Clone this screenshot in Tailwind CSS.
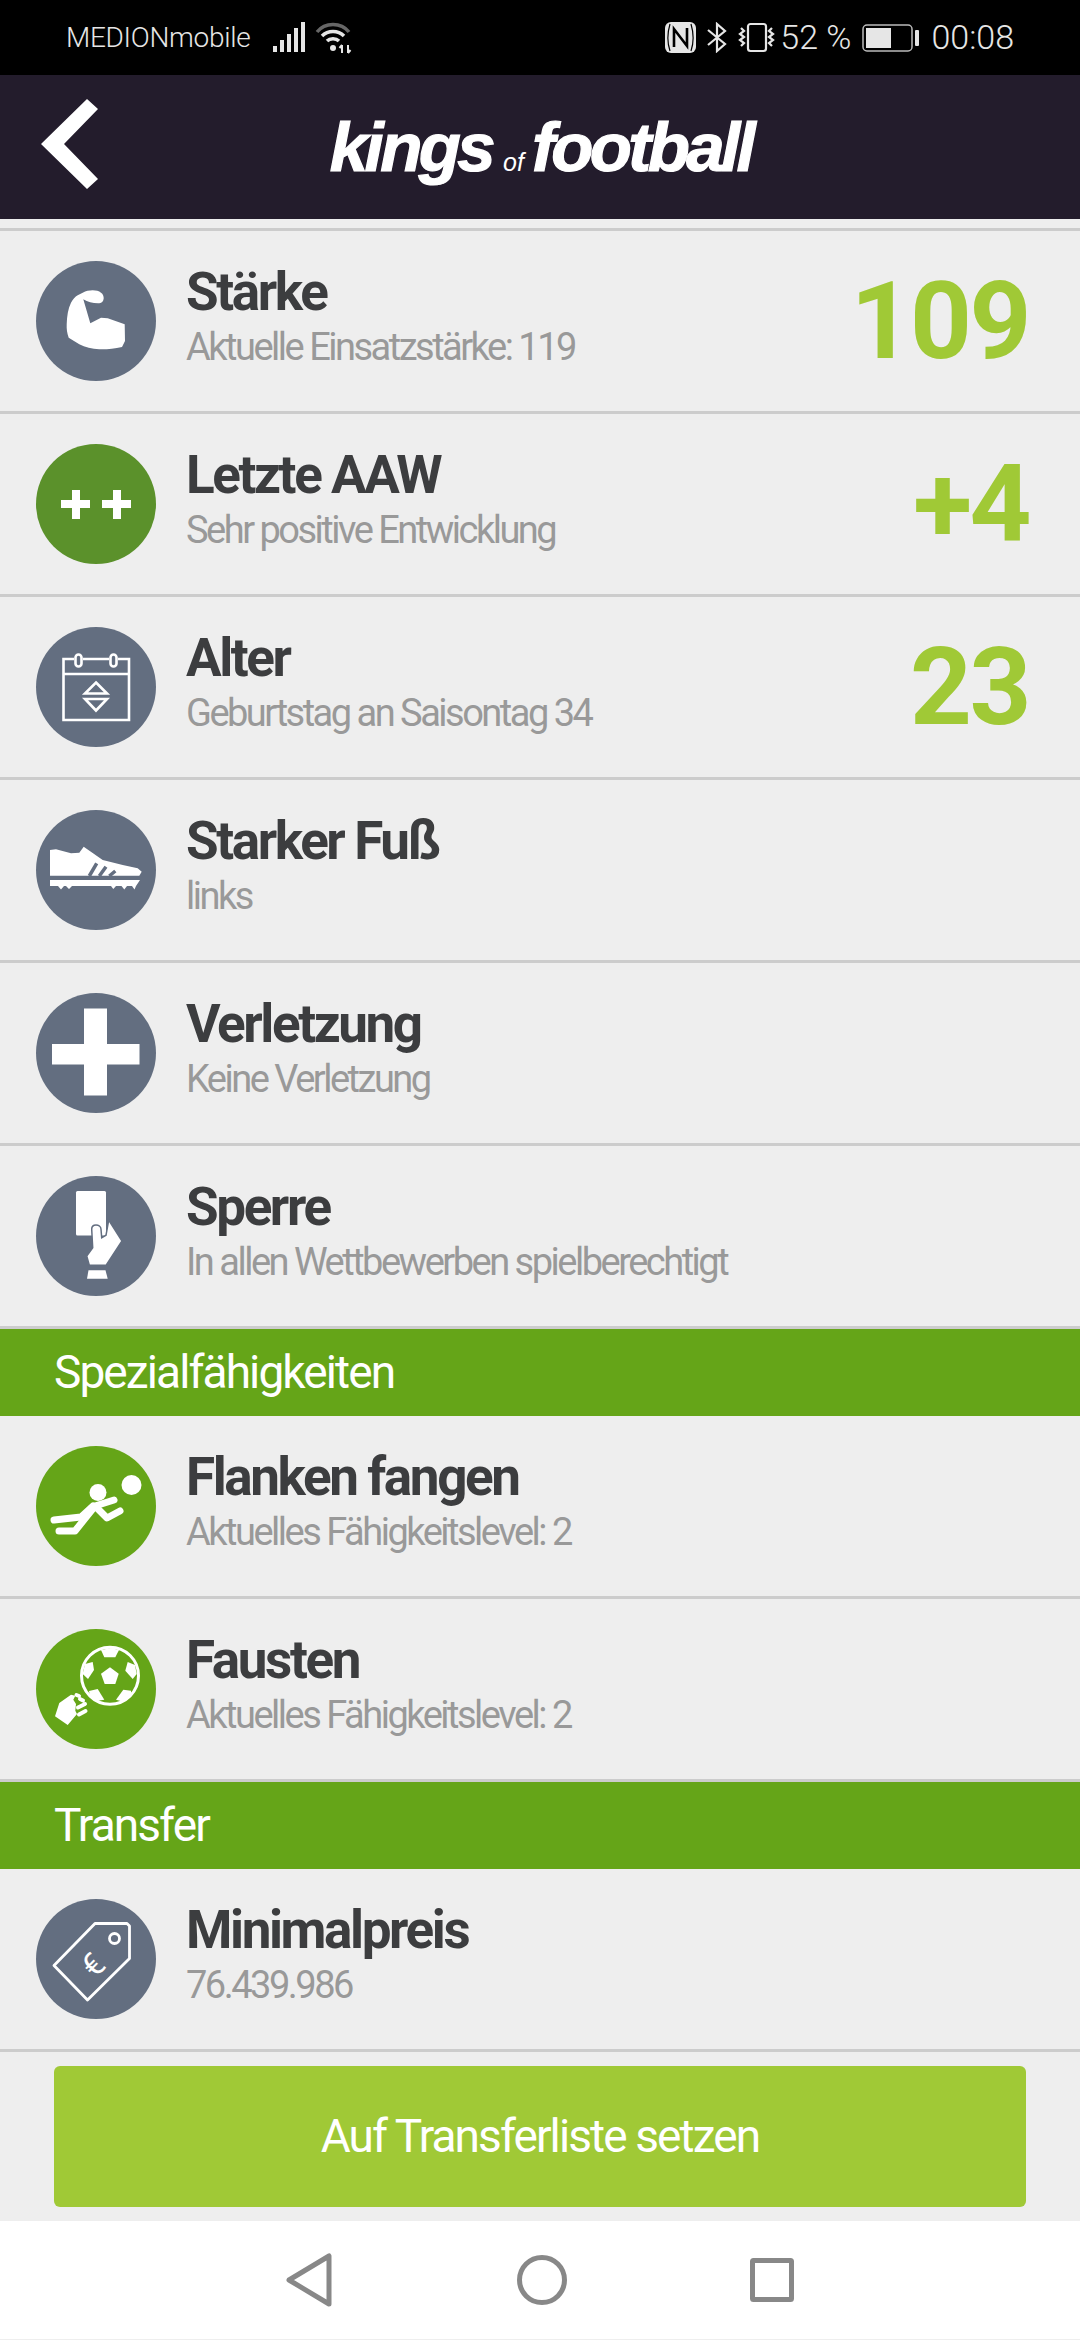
<!DOCTYPE html>
<html lang="de">
<head>
    <title>Kings of Football</title>
    <script src="https://cdn.jsdelivr.net/npm/@tailwindcss/browser@4"></script>
</head>
<body class="w-[1080px] h-[2340px] overflow-hidden bg-[#eeeeee] font-['Roboto',sans-serif]">

    <!-- status bar -->
    <div class="h-[75px] bg-black flex items-center justify-between pl-[66px] pr-[66px] text-[#e6e6e6] font-light">
        <div class="flex items-center">
            <span class="text-[28px] tracking-[-0.3px]">MEDIONmobile</span>
            <svg class="ml-[23px]" width="34" height="32" viewBox="0 0 34 32" fill="#e6e6e6">
                <rect x="0" y="24" width="4" height="6"/><rect x="7" y="18" width="4" height="12"/><rect x="14" y="12" width="4" height="18"/><rect x="21" y="6" width="4" height="24"/><rect x="28" y="0" width="4" height="30"/>
            </svg>
            <svg class="ml-[8px]" width="38" height="32" viewBox="0 0 38 32" fill="none" stroke-width="3.5">
                <path d="M2 10 C10 0 26 0 34 10" stroke="#666"/>
                <path d="M7 14 C13 8 23 8 29 14" stroke="#e6e6e6"/>
                <path d="M12 19 C15 16 21 16 24 19" stroke="#e6e6e6"/>
                <circle cx="18" cy="26" r="3" fill="#e6e6e6" stroke="none"/>
                <path d="M27 31 V23 M27 23 l-2.5 3 M33 23 V31 M33 31 l2.5 -3" stroke="#e6e6e6" stroke-width="2"/>
            </svg>
        </div>
        <div class="flex items-center text-[34px]">
            <svg width="31" height="31" viewBox="0 0 31 31">
                <rect width="31" height="31" rx="6" fill="#e6e6e6"/>
                <path d="M5 2 C2 12 2 20 5 29 M26 2 C29 12 29 20 26 29" fill="none" stroke="#000" stroke-width="1.2"/>
                <path d="M9 25 V7 L22 24 V6" fill="none" stroke="#000" stroke-width="2.6"/>
            </svg>
            <svg class="ml-[11px]" width="20" height="31" viewBox="0 0 20 31" fill="none" stroke="#e6e6e6" stroke-width="2.2">
                <path d="M1 8 L18 22 L10 29 V2 L18 9 L1 23"/>
            </svg>
            <svg class="ml-[10px]" width="40" height="31" viewBox="0 0 40 31" fill="none" stroke="#e6e6e6" stroke-width="2.2">
                <rect x="11" y="2" width="18" height="27" rx="2.5"/>
                <path d="M4 6 l3 3 -4 3 4 3 -4 3 4 3 -3 3"/>
                <path d="M35 6 l-3 3 4 3 -4 3 4 3 -4 3 3 3"/>
            </svg>
            <span class="ml-[3px]">52 %</span>
            <svg class="ml-[11px]" width="58" height="28" viewBox="0 0 58 28">
                <rect x="1" y="1" width="49" height="26" rx="4" fill="none" stroke="#bbb" stroke-width="1.5"/>
                <rect x="4" y="4" width="25" height="20" fill="#e6e6e6"/>
                <rect x="53" y="6" width="4" height="16" rx="1" fill="#e6e6e6"/>
            </svg>
            <span class="ml-[11px]">00:08</span>
        </div>
    </div>

    <!-- header -->
    <div class="h-[144px] bg-[#231c2c] relative flex items-center justify-center text-white">
        <svg class="absolute left-[41px] top-[24px]" width="58" height="92" viewBox="0 0 58 92" fill="#fff">
            <polygon points="46,0 57,10 23,45 57,80 46,90 0,45"/>
        </svg>
        <div class="flex items-baseline font-['Liberation_Sans',sans-serif] font-bold italic text-[69px] tracking-[-3.6px] [-webkit-text-stroke:1.2px_white] mt-[2px] pl-[2px]">
            <span>kings</span>
            <span class="text-[25px] font-normal tracking-[0px] [-webkit-text-stroke:0px_white] ml-[11px] mr-[8px]">of</span>
            <span>football</span>
        </div>
    </div>

    <div class="h-[9px]"></div>
    <div class="h-[3px] bg-[#cccccc]"></div>

    <!-- Stärke -->
    <div class="h-[183px] border-b-[3px] border-[#cccccc] flex items-center pl-[36px] pr-[51px]">
        <div class="w-[120px] h-[120px] rounded-full bg-[#636e80] shrink-0">
            <svg width="120" height="120" viewBox="0 0 120 120" fill="#fff">
                <path d="M46.7 31.7 C50 30 53 29.3 56.7 29.3 C60 29.3 63 30 65 31.7 C67 33 67.7 35 67.7 37.3 C67.5 40 66 42 63.3 42.3 C57 42.5 52 41 47.3 38.3 L54.3 62.3 L65 56.7 L71.7 57.3 L88.7 63.3 L89 80 L86 86 C78 88 70 88.5 63.3 88.3 C56 88 49 86 43.3 83.3 L32.7 76.7 C31 72 30.5 68 30.7 63.3 C31 55 32 48 35 41.7 C37 38 39 36 41.7 34.3 Z"/>
            </svg>
        </div>
        <div class="ml-[30px] flex-1">
            <div class="text-[53px] leading-[54px] font-bold tracking-[-2.4px] text-[#3c3d3f] mt-[-8px] mb-[6px]">Stärke</div>
            <div class="text-[38px] leading-[44px] font-normal tracking-[-2.5px] text-[#999999]">Aktuelle Einsatzstärke: 119</div>
        </div>
        <div class="text-[108px] leading-none font-bold text-[#a0c936] tracking-[-2.5px]">109</div>
    </div>

    <!-- Letzte AAW -->
    <div class="h-[183px] border-b-[3px] border-[#cccccc] flex items-center pl-[36px] pr-[51px]">
        <div class="w-[120px] h-[120px] rounded-full bg-[#5b912b] shrink-0">
            <svg width="120" height="120" viewBox="0 0 120 120" fill="#fff">
                <path d="M36 46 h8 v10 h10 v8 h-10 v11 h-8 v-11 h-11 v-8 h11 Z"/>
                <path d="M77 46 h8 v10 h10 v8 h-10 v11 h-8 v-11 h-11 v-8 h11 Z"/>
            </svg>
        </div>
        <div class="ml-[30px] flex-1">
            <div class="text-[53px] leading-[54px] font-bold tracking-[-2.4px] text-[#3c3d3f] mt-[-8px] mb-[6px]">Letzte AAW</div>
            <div class="text-[38px] leading-[44px] font-normal tracking-[-2.5px] text-[#999999]">Sehr positive Entwicklung</div>
        </div>
        <div class="text-[108px] leading-none font-bold text-[#a0c936] tracking-[-2.5px]">+4</div>
    </div>

    <!-- Alter -->
    <div class="h-[183px] border-b-[3px] border-[#cccccc] flex items-center pl-[36px] pr-[51px]">
        <div class="w-[120px] h-[120px] rounded-full bg-[#636e80] shrink-0">
            <svg width="120" height="120" viewBox="0 0 120 120" fill="none" stroke="#fff" stroke-width="2.6">
                <path d="M38 32 H27.5 V93 H93 V32 H82 M47 32 H73 M27.5 47 H93"/>
                <rect x="39.5" y="27.5" width="6" height="12" rx="3"/>
                <rect x="74.5" y="27.5" width="6" height="12" rx="3"/>
                <polygon points="60,55.5 71,66.5 49,66.5"/>
                <polygon points="49,72 71,72 60,83.5"/>
            </svg>
        </div>
        <div class="ml-[30px] flex-1">
            <div class="text-[53px] leading-[54px] font-bold tracking-[-2.4px] text-[#3c3d3f] mt-[-8px] mb-[6px]">Alter</div>
            <div class="text-[38px] leading-[44px] font-normal tracking-[-2.5px] text-[#999999]">Geburtstag an Saisontag 34</div>
        </div>
        <div class="text-[108px] leading-none font-bold text-[#a0c936] tracking-[-2.5px]">23</div>
    </div>

    <!-- Starker Fuß -->
    <div class="h-[183px] border-b-[3px] border-[#cccccc] flex items-center pl-[36px] pr-[51px]">
        <div class="w-[120px] h-[120px] rounded-full bg-[#636e80] shrink-0">
            <svg width="120" height="120" viewBox="0 0 120 120" fill="#fff">
                <path d="M14 40 L20 39.3 L35 43.3 L43.3 42.7 L47.7 36.7 L66.7 50 L86.7 55 L101.7 58.3 L105.7 61.7 L103.3 65.7 H14 Z"/>
                <path d="M14 70 H104 L100 76 L98.5 79.5 L96 76 H91 L88.3 79.5 L85.5 76 H80 L77.3 79 L75 76 H36 L33 79 L30 76 H28 L25 79.5 L22 76 H14 Z"/>
                <path d="M53.3 66 L60.7 53.3 M63.3 66 L70 56.7 M73.3 66 L79.3 61" stroke="#636e80" stroke-width="3.5" fill="none"/>
            </svg>
        </div>
        <div class="ml-[30px] flex-1">
            <div class="text-[53px] leading-[54px] font-bold tracking-[-2.4px] text-[#3c3d3f] mt-[-8px] mb-[6px]">Starker Fuß</div>
            <div class="text-[38px] leading-[44px] font-normal tracking-[-2.5px] text-[#999999]">links</div>
        </div>
    </div>

    <!-- Verletzung -->
    <div class="h-[183px] border-b-[3px] border-[#cccccc] flex items-center pl-[36px] pr-[51px]">
        <div class="w-[120px] h-[120px] rounded-full bg-[#636e80] shrink-0">
            <svg width="120" height="120" viewBox="0 0 120 120" fill="#fff">
                <path d="M48 15.5 H71 V51 H103.5 V71.5 H71 V102.5 H48 V71.5 H16 V51 H48 Z"/>
            </svg>
        </div>
        <div class="ml-[30px] flex-1">
            <div class="text-[53px] leading-[54px] font-bold tracking-[-2.4px] text-[#3c3d3f] mt-[-8px] mb-[6px]">Verletzung</div>
            <div class="text-[38px] leading-[44px] font-normal tracking-[-2.5px] text-[#999999]">Keine Verletzung</div>
        </div>
    </div>

    <!-- Sperre -->
    <div class="h-[183px] border-b-[3px] border-[#cccccc] flex items-center pl-[36px] pr-[51px]">
        <div class="w-[120px] h-[120px] rounded-full bg-[#636e80] shrink-0">
            <svg width="120" height="120" viewBox="0 0 120 120" fill="#fff">
                <rect x="40" y="15" width="30" height="44.5" rx="1.5"/>
                <path d="M55.7 53.3 C55.7 50.5 57.5 49 60 49 C62.5 49 65 50.5 65 53.3 L65.7 61.7 L70 59.3 L72.7 44 L86 65 L70 89.3 H53.3 L50.7 80 L56.7 71.7 Z" stroke="#636e80" stroke-width="1.5"/>
                <path d="M52.5 94.3 H69.5 L71.7 102.7 H51 Z"/>
            </svg>
        </div>
        <div class="ml-[30px] flex-1">
            <div class="text-[53px] leading-[54px] font-bold tracking-[-2.4px] text-[#3c3d3f] mt-[-8px] mb-[6px]">Sperre</div>
            <div class="text-[38px] leading-[44px] font-normal tracking-[-2.5px] text-[#999999]">In allen Wettbewerben spielberechtigt</div>
        </div>
    </div>

    <div class="h-[87px] bg-[#65a518] flex items-center pl-[54px] text-white text-[46px] font-normal tracking-[-1.9px]">Spezialfähigkeiten</div>

    <!-- Flanken fangen -->
    <div class="h-[183px] border-b-[3px] border-[#cccccc] flex items-center pl-[36px] pr-[51px]">
        <div class="w-[120px] h-[120px] rounded-full bg-[#65a518] shrink-0">
            <svg width="120" height="120" viewBox="0 0 120 120" fill="none" stroke="#fff" stroke-width="7" stroke-linecap="round" stroke-linejoin="round">
                <circle cx="95.5" cy="39" r="10" fill="#fff" stroke="none"/>
                <circle cx="62" cy="46.5" r="8.5" fill="#fff" stroke="none"/>
                <path d="M18 74 L45 71 L57 60"/>
                <path d="M23 85 H39 L59 60 L78 54"/>
                <path d="M60 61 L71 72 L84 65"/>
            </svg>
        </div>
        <div class="ml-[30px] flex-1">
            <div class="text-[53px] leading-[54px] font-bold tracking-[-2.4px] text-[#3c3d3f] mt-[-8px] mb-[6px]">Flanken fangen</div>
            <div class="text-[38px] leading-[44px] font-normal tracking-[-2.5px] text-[#999999]">Aktuelles Fähigkeitslevel: 2</div>
        </div>
    </div>

    <!-- Fausten -->
    <div class="h-[183px] border-b-[3px] border-[#cccccc] flex items-center pl-[36px] pr-[51px]">
        <div class="w-[120px] h-[120px] rounded-full bg-[#65a518] shrink-0">
            <svg width="120" height="120" viewBox="0 0 120 120" fill="#fff">
                <circle cx="74" cy="46.7" r="28.5" fill="none" stroke="#fff" stroke-width="3"/>
                <polygon points="74,38.3 82.7,44.7 79.3,55 68.7,55 65,44.7"/>
                <polygon points="65,21 75,19 83,21 79.3,28.3 68.3,28.3"/>
                <polygon points="56.7,33 58,41 52,50 46.7,45 49,35"/>
                <polygon points="91.7,33 99,36 100.7,45 96.7,50 89.3,41.7"/>
                <polygon points="53,62 61.7,60 68.3,70.7 60,72 54,66.7"/>
                <polygon points="87.3,60.7 95,61.7 95,66.7 87.3,72.7 80,70.7"/>
                <polygon points="19,87.3 23.3,74 35,65.7 39.3,66.7 37.3,70.7 40,75 39.3,81.7 41,85 31.7,96"/>
                <path d="M40.5 66 L43 67 M44 70 L47 71.5 M42 78.5 L49 75 M43 85.5 L49.5 82" stroke="#fff" stroke-width="4" stroke-linecap="round" fill="none"/>
            </svg>
        </div>
        <div class="ml-[30px] flex-1">
            <div class="text-[53px] leading-[54px] font-bold tracking-[-2.4px] text-[#3c3d3f] mt-[-8px] mb-[6px]">Fausten</div>
            <div class="text-[38px] leading-[44px] font-normal tracking-[-2.5px] text-[#999999]">Aktuelles Fähigkeitslevel: 2</div>
        </div>
    </div>

    <div class="h-[87px] bg-[#65a518] flex items-center pl-[54px] text-white text-[46px] font-normal tracking-[-1.9px]">Transfer</div>

    <!-- Minimalpreis -->
    <div class="h-[183px] border-b-[3px] border-[#cccccc] flex items-center pl-[36px] pr-[51px]">
        <div class="w-[120px] h-[120px] rounded-full bg-[#636e80] shrink-0">
            <svg width="120" height="120" viewBox="0 0 120 120" fill="none" stroke="#fff" stroke-width="2.8" stroke-linejoin="round">
                <path d="M59 24.5 H91 L93.5 27 V59.5 L51.5 101 L18 66.5 Z"/>
                <circle cx="78.5" cy="39.5" r="5"/>
                <text x="0" y="0" transform="translate(57 66) rotate(-45)" text-anchor="middle" dominant-baseline="central" fill="#fff" stroke="none" font-size="32" font-family="Roboto">€</text>
            </svg>
        </div>
        <div class="ml-[30px] flex-1">
            <div class="text-[53px] leading-[54px] font-bold tracking-[-2.4px] text-[#3c3d3f] mt-[-8px] mb-[6px]">Minimalpreis</div>
            <div class="text-[38px] leading-[44px] font-normal tracking-[-2.5px] text-[#999999]">76.439.986</div>
        </div>
    </div>

    <!-- button -->
    <div class="px-[54px] pt-[14px] pb-[14px]">
        <div class="h-[141px] rounded-[6px] bg-[#a0c936] flex items-center justify-center text-white text-[46px] font-normal tracking-[-1.9px]">Auf Transferliste setzen</div>
    </div>

    <!-- nav bar -->
    <div class="h-[118px] bg-white flex items-center justify-center">
        <svg width="46" height="54" viewBox="0 0 46 54" fill="none" stroke="#888" stroke-width="5" stroke-linejoin="round">
            <polygon points="3,27 43,3 43,51"/>
        </svg>
        <svg class="ml-[185px]" width="50" height="50" viewBox="0 0 50 50" fill="none" stroke="#888" stroke-width="5">
            <circle cx="25" cy="25" r="22.5"/>
        </svg>
        <svg class="ml-[183px]" width="44" height="44" viewBox="0 0 44 44" fill="none" stroke="#888" stroke-width="5" stroke-linejoin="round">
            <rect x="2.5" y="2.5" width="39" height="39" rx="1"/>
        </svg>
    </div>
</body>
</html>
